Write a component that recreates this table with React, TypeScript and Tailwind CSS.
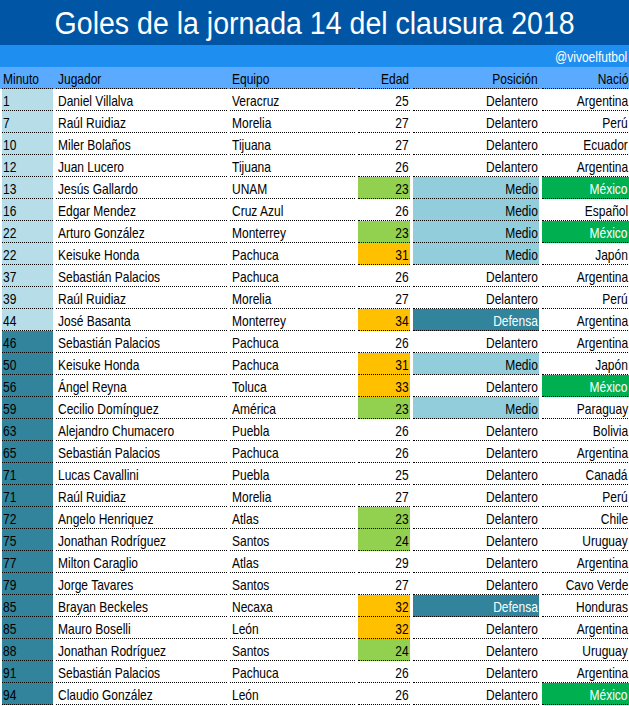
const rows: [string, string, string, number, string, string][] = [
  ['1', 'Daniel Villalva', 'Veracruz', 25, 'Delantero', 'Argentina'],
  ['7', 'Raúl Ruidiaz', 'Morelia', 27, 'Delantero', 'Perú'],
  ['10', 'Miler Bolaños', 'Tijuana', 27, 'Delantero', 'Ecuador'],
  ['12', 'Juan Lucero', 'Tijuana', 26, 'Delantero', 'Argentina'],
  ['13', 'Jesús Gallardo', 'UNAM', 23, 'Medio', 'México'],
  ['16', 'Edgar Mendez', 'Cruz Azul', 26, 'Medio', 'Español'],
  ['22', 'Arturo González', 'Monterrey', 23, 'Medio', 'México'],
  ['22', 'Keisuke Honda', 'Pachuca', 31, 'Medio', 'Japón'],
  ['37', 'Sebastián Palacios', 'Pachuca', 26, 'Delantero', 'Argentina'],
  ['39', 'Raúl Ruidiaz', 'Morelia', 27, 'Delantero', 'Perú'],
  ['44', 'José Basanta', 'Monterrey', 34, 'Defensa', 'Argentina'],
  ['46', 'Sebastián Palacios', 'Pachuca', 26, 'Delantero', 'Argentina'],
  ['50', 'Keisuke Honda', 'Pachuca', 31, 'Medio', 'Japón'],
  ['56', 'Ángel Reyna', 'Toluca', 33, 'Delantero', 'México'],
  ['59', 'Cecilio Domínguez', 'América', 23, 'Medio', 'Paraguay'],
  ['63', 'Alejandro Chumacero', 'Puebla', 26, 'Delantero', 'Bolivia'],
  ['65', 'Sebastián Palacios', 'Pachuca', 26, 'Delantero', 'Argentina'],
  ['71', 'Lucas Cavallini', 'Puebla', 25, 'Delantero', 'Canadá'],
  ['71', 'Raúl Ruidiaz', 'Morelia', 27, 'Delantero', 'Perú'],
  ['72', 'Angelo Henriquez', 'Atlas', 23, 'Delantero', 'Chile'],
  ['75', 'Jonathan Rodríguez', 'Santos', 24, 'Delantero', 'Uruguay'],
  ['77', 'Milton Caraglio', 'Atlas', 29, 'Delantero', 'Argentina'],
  ['79', 'Jorge Tavares', 'Santos', 27, 'Delantero', 'Cavo Verde'],
  ['85', 'Brayan Beckeles', 'Necaxa', 32, 'Defensa', 'Honduras'],
  ['85', 'Mauro Boselli', 'León', 32, 'Delantero', 'Argentina'],
  ['88', 'Jonathan Rodríguez', 'Santos', 24, 'Delantero', 'Uruguay'],
  ['91', 'Sebastián Palacios', 'Pachuca', 26, 'Delantero', 'Argentina'],
  ['94', 'Claudio González', 'León', 26, 'Delantero', 'México'],
]

const grid = 'grid grid-cols-[51px_171px_125px_52px_126px_88px] gap-x-[3px] pl-[2px]'
const cell = 'h-[22px] leading-[24px] border-b border-dotted border-black whitespace-nowrap overflow-hidden'

// no narrow font installed, so squeeze the text like Arial Narrow
function L({ children }: { children: React.ReactNode }) {
  return <span className="inline-block scale-x-[0.8] origin-left">{children}</span>
}
function R({ children }: { children: React.ReactNode }) {
  return <span className="inline-block scale-x-[0.8] origin-right">{children}</span>
}

function ageColor(age: number) {
  if (age <= 24) return 'bg-[#92d050]'
  if (age >= 31) return 'bg-[#ffc000]'
  return ''
}

function posColor(pos: string) {
  if (pos === 'Medio') return 'bg-[#92cddc]'
  if (pos === 'Defensa') return 'bg-[#31849b] text-white'
  return ''
}

export default function App() {
  return (
    <div className="w-[629px] h-[706px] overflow-hidden bg-white text-black font-['Liberation_Sans',Arial,sans-serif] text-[15px]">
      <div className="h-[45px] bg-[#0055a5] text-white text-center leading-[47px] text-[31px]">
        <span className="inline-block scale-x-[0.92]">Goles de la jornada 14 del clausura 2018</span>
      </div>
      <div className="h-[22px] bg-[#1f8ef1] text-white text-right leading-[23px] pr-[2px]">
        <R>@vivoelfutbol</R>
      </div>
      <div className={`${grid} bg-[#5aaaff]`}>
        <div className={`${cell} pl-[1px]`}><L>Minuto</L></div>
        <div className={`${cell} pl-[2px]`}><L>Jugador</L></div>
        <div className={`${cell} pl-[2px]`}><L>Equipo</L></div>
        <div className={`${cell} text-right pr-[1px]`}><R>Edad</R></div>
        <div className={`${cell} text-right pr-[1px]`}><R>Posición</R></div>
        <div className={`${cell} text-right pr-[2px]`}><R>Nació</R></div>
      </div>
      {rows.map(([min, name, team, age, pos, country], i) => (
        <div key={i} className={grid}>
          <div className={`${cell} pl-[1px] ${Number(min) >= 46 ? 'bg-[#31849b]' : 'bg-[#b7dee8]'}`}><L>{min}</L></div>
          <div className={`${cell} pl-[2px]`}><L>{name}</L></div>
          <div className={`${cell} pl-[2px]`}><L>{team}</L></div>
          <div className={`${cell} text-right pr-[1px] ${ageColor(age)}`}><R>{age}</R></div>
          <div className={`${cell} text-right pr-[1px] ${posColor(pos)}`}><R>{pos}</R></div>
          <div className={`${cell} text-right pr-[2px] ${country === 'México' ? 'bg-[#00b050] text-white' : ''}`}><R>{country}</R></div>
        </div>
      ))}
    </div>
  )
}
